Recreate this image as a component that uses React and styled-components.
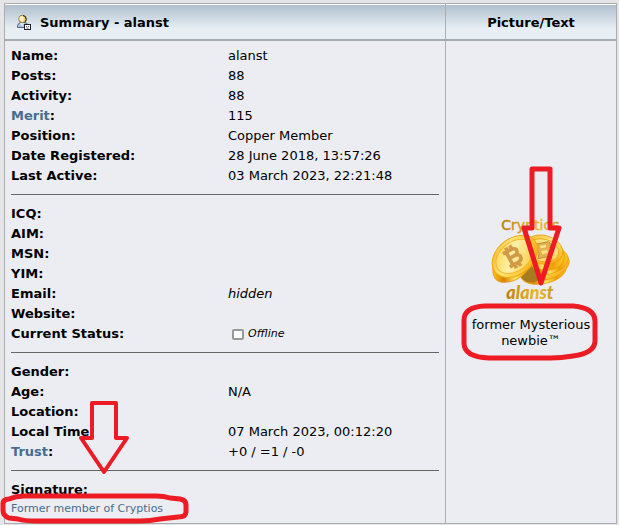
import React from 'react'
import styled, { createGlobalStyle } from 'styled-components'

const GlobalStyle = createGlobalStyle`
    body {
        margin: 0;
        background: #e5e5e8;
        color: #000;
        font-family: Verdana, "DejaVu Sans", sans-serif;
        font-size: 13px;
    }
`;

const Page = styled.main`
    padding: 3px 2px 0 4px;
`;

const Panel = styled.div`
    display: grid;
    grid-template-columns: minmax(0, 1fr) 170px;
    gap: 0 1px;
    border: 1px solid #adadad;
    background: #adadad;
`;

const Heading = styled.h2`
    display: flex;
    align-items: center;
    justify-content: ${({ $centered }) => ($centered ? 'center' : 'flex-start')};
    gap: 8px;
    height: 34px;
    margin: 0;
    padding: 0 11px;
    border-top: 1px solid #fff;
    border-bottom: 2px solid #a5acb2;
    background: linear-gradient(#b0c0ce, #e7eff5 70%, #e7eff5);
    background-clip: padding-box;
    font-size: 13px;
    font-weight: bold;
`;

const Details = styled.section`
    padding: 5px 6px;
    background: #ecedf3;
`;

const PictureCell = styled.section`
    display: flex;
    flex-direction: column;
    align-items: center;
    justify-content: center;
    gap: 13px;
    position: relative;
    background: #ecedf3;
`;

const InfoTable = styled.table`
    width: 100%;
    border-collapse: collapse;
    table-layout: fixed;
    line-height: 20px;

    th {
        width: 217px;
        padding: 0;
        text-align: left;
        white-space: nowrap;
    }

    td {
        padding: 0;
    }
`;

const Divider = styled.hr`
    height: 1px;
    margin: 8px 0 9px;
    border: 0;
    background: #666;
`;

const Link = styled.a`
    color: #476c8e;
    text-decoration: none;
`;

const Status = styled.label`
    display: flex;
    align-items: center;
    gap: 4px;
    height: 20px;
    padding-left: 4px;
    font-size: 11px;
    font-style: italic;
`;

const StatusBox = styled.input`
    appearance: none;
    width: 12px;
    height: 11px;
    margin: 0;
    border: 2px solid #999;
    border-radius: 2px;
    background: #fff;
`;

const Signature = styled.div`
    position: relative;
    line-height: 20px;
`;

const SignatureText = styled.div`
    font-size: 11px;
    line-height: 18px;
`;

const Caption = styled.div`
    position: relative;
    width: 130px;
    line-height: 16px;
    text-align: center;
`;

const Mark = styled.svg`
    position: absolute;
    overflow: visible;
    pointer-events: none;
    fill: none;
    stroke: #ed1c24;
    stroke-width: 5;
    stroke-linejoin: round;
`;

const CaptionRing = styled(Mark)`
    top: -14px;
    left: -5px;
`;

const SignatureRing = styled(Mark)`
    top: 13px;
    left: -11px;
`;

const SignatureArrow = styled(Mark)`
    bottom: 42px;
    left: 67px;
    stroke-width: 4;
`;

const PictureArrow = styled(Mark)`
    top: 125px;
    left: 75px;
`;

const groups = [
    [
        { label: 'Name', value: 'alanst' },
        { label: 'Posts', value: '88' },
        { label: 'Activity', value: '88' },
        { label: 'Merit', value: '115', link: true },
        { label: 'Position', value: 'Copper Member' },
        { label: 'Date Registered', value: '28 June 2018, 13:57:26' },
        { label: 'Last Active', value: '03 March 2023, 22:21:48' },
    ],
    [
        { label: 'ICQ' },
        { label: 'AIM' },
        { label: 'MSN' },
        { label: 'YIM' },
        { label: 'Email', value: <i>hidden</i> },
        { label: 'Website' },
        { label: 'Current Status', value: <Status><StatusBox type="checkbox" />Offline</Status> },
    ],
    [
        { label: 'Gender' },
        { label: 'Age', value: 'N/A' },
        { label: 'Location' },
        { label: 'Local Time', value: '07 March 2023, 00:12:20' },
        { label: 'Trust', value: '+0 / =1 / -0', link: true },
    ],
];

function UserIcon() {
    return (
        <svg width="16" height="16" viewBox="0 0 16 16" aria-hidden="true">
            <path d="M1.5 13.5V11.5Q2 9 5 8.5H9Q12 9 12 12V13.5Z" fill="#a9c6ea" stroke="#56687f" />
            <path d="M4 9L6 12L8 9" fill="#eef5ff" />
            <circle cx="6.5" cy="5" r="3.8" fill="#f6cf6c" stroke="#8a6a2c" strokeWidth=".8" />
            <path d="M3.5 5.5Q3 2 6.5 2Q8.5 4 7.5 7Q5 8.5 3.5 5.5Z" fill="#fff4c9" />
            <path d="M7 1.5Q10.5 2 10.2 5.5Q10 7.5 8.5 8.3" fill="none" stroke="#2e2616" />
            <rect x="8.5" y="10.5" width="6" height="5" fill="#fff" stroke="#1c2230" />
            <path d="M10 12.5H11M12 12.5H13M10.5 14H12.5" stroke="#555f70" />
        </svg>
    )
}

function Avatar() {
    return (
        <svg width="90" height="88" viewBox="18 165 270 264" role="img" aria-label="Cryptios alanst">
            <defs>
                <linearGradient id="face" x1="0" y1="0" x2="1" y2="1">
                    <stop offset="0" stopColor="#f4a90b" />
                    <stop offset=".35" stopColor="#ffe477" />
                    <stop offset=".6" stopColor="#ffd246" />
                    <stop offset="1" stopColor="#f29a00" />
                </linearGradient>
                <linearGradient id="inner" x1="0" y1="0" x2="1" y2="1">
                    <stop offset="0" stopColor="#ffd04a" />
                    <stop offset=".45" stopColor="#fff0a6" />
                    <stop offset="1" stopColor="#ffc63c" />
                </linearGradient>
                <linearGradient id="edge">
                    <stop offset="0" stopColor="#ffc31b" />
                    <stop offset=".25" stopColor="#d98200" />
                    <stop offset=".5" stopColor="#ffe564" />
                    <stop offset=".75" stopColor="#ed9d05" />
                    <stop offset="1" stopColor="#ffc928" />
                </linearGradient>
                <linearGradient id="lettering">
                    <stop offset="0" stopColor="#b8800c" />
                    <stop offset=".4" stopColor="#dea51c" />
                    <stop offset=".7" stopColor="#e8b92e" />
                    <stop offset="1" stopColor="#c59520" />
                </linearGradient>
            </defs>
            <text x="64" y="207" fontFamily="Verdana, DejaVu Sans, sans-serif" fontSize="42" fill="url(#lettering)" stroke="url(#lettering)" strokeWidth="1.5">Cryptios</text>
            <g stroke="#e79b08" strokeWidth="2">
                <ellipse cx="190" cy="333" rx="69" ry="35" transform="rotate(-12 190 333)" fill="url(#edge)" />
                <ellipse cx="202" cy="316" rx="68" ry="38" transform="rotate(-18 202 316)" fill="url(#face)" />
                <ellipse cx="201" cy="301" rx="64" ry="39" transform="rotate(-12 201 301)" fill="url(#edge)" />
                <ellipse cx="196" cy="280" rx="57" ry="47" transform="rotate(14 196 280)" fill="url(#edge)" />
                <ellipse cx="190" cy="266" rx="59" ry="43" transform="rotate(14 190 266)" fill="url(#face)" />
                <ellipse cx="189" cy="268" rx="48" ry="34" transform="rotate(14 189 268)" fill="url(#inner)" />
            </g>
            <path d="M123 350L150 310L184 350Q165 369 138 362Z" fill="#a97b20" />
            <path d="M165 250L205 242Q218 248 209 261Q223 270 208 286L174 293L177 278L170 266Z" fill="#e2b250" stroke="#c48d33" strokeWidth="3" />
            <path d="M180 254L198 251V259L183 262ZM184 270L202 267V276L187 280Z" fill="#ffe28a" />
            <path d="M38 320Q37 361 65 364Q115 368 150 320Q176 290 173 255Z" fill="url(#edge)" stroke="#de9005" strokeWidth="2" />
            <ellipse cx="105" cy="286" rx="76" ry="54" transform="rotate(-38 105 286)" fill="url(#face)" stroke="#edaa16" strokeWidth="3" />
            <ellipse cx="104" cy="286" rx="63" ry="43" transform="rotate(-38 104 286)" fill="url(#inner)" stroke="#f3b52a" strokeWidth="3" />
            <g transform="translate(98 287) rotate(-28)" fill="none" stroke="#d29a45" strokeWidth="11">
                <path d="M-22 -21H8Q22 -19 19 -8Q16 0 3 0H-11H8Q25 2 20 16Q16 23 5 23H-22M-11 -21V23M-6 -34V-21M8 -34V-21M-6 23V36M8 23V36" />
            </g>
            <text x="79" y="415" fontFamily="Lato, sans-serif" fontSize="54" fontStyle="italic" fontWeight="900" fill="url(#lettering)">alanst</text>
        </svg>
    )
}

export default function App() {
    return (
        <>
            <GlobalStyle />
            <Page>
                <Panel>
                    <Heading><UserIcon />Summary - alanst</Heading>
                    <Heading $centered>Picture/Text</Heading>
                    <Details>
                        {groups.map((rows, index) => (
                            <React.Fragment key={index}>
                                <InfoTable>
                                    <tbody>
                                        {rows.map(({ label, value, link }) => (
                                            <tr key={label}>
                                                <th scope="row">{link ? <Link href="#">{label}</Link> : label}:</th>
                                                <td>{value}</td>
                                            </tr>
                                        ))}
                                    </tbody>
                                </InfoTable>
                                <Divider />
                            </React.Fragment>
                        ))}
                        <Signature>
                            <b>Signature:</b>
                            <SignatureText><Link href="#">Former member of Cryptios</Link></SignatureText>
                            <SignatureArrow width="52" height="76" viewBox="0 0 52 76">
                                <path d="M14 3H38V38H49L26 72L3 38H14Z" />
                            </SignatureArrow>
                            <SignatureRing width="188" height="30" viewBox="0 0 188 30">
                                <path d="M24 3H156Q164 3 170 5L180 6Q186 7 186 12V19Q186 24 178 24L160 26Q150 28 140 28H36Q24 28 18 26L9 25Q3 23 3 17V11Q3 6 9 6Q16 3 24 3Z" />
                            </SignatureRing>
                        </Signature>
                    </Details>
                    <PictureCell>
                        <Avatar />
                        <Caption>
                            former Mysterious newbie™
                            <CaptionRing width="136" height="56" viewBox="0 0 136 56">
                                <path d="M24 3H112Q134 5 134 18V38Q134 50 112 53Q100 55 90 55H28Q3 54 3 40V17Q3 4 24 3Z" />
                            </CaptionRing>
                        </Caption>
                        <PictureArrow width="42" height="122" viewBox="0 0 42 122">
                            <path d="M11 3H29V62H38L20 117L3 62H11Z" />
                        </PictureArrow>
                    </PictureCell>
                </Panel>
            </Page>
        </>
    )
}
